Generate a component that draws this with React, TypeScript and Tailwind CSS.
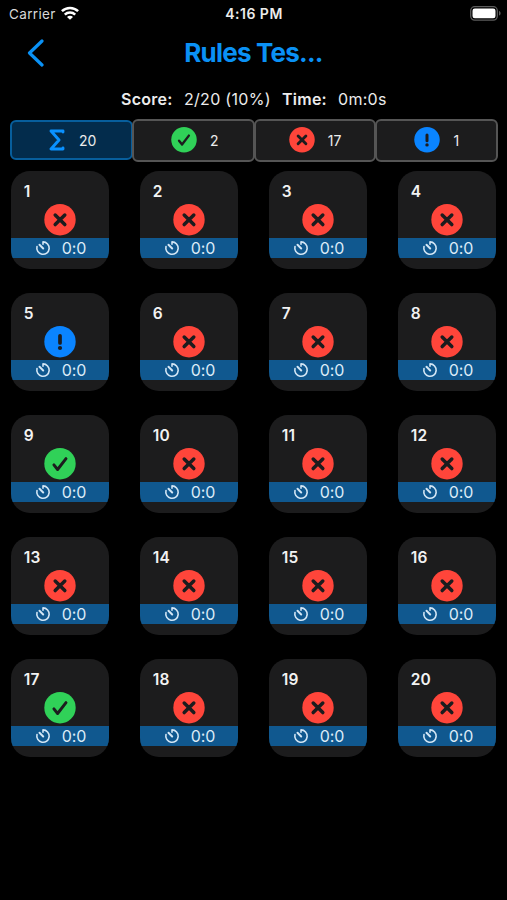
type Status = 'right' | 'wrong' | 'skipped';

const results: Status[] = Array.from({ length: 20 }, (_, i) => {
  const n = i + 1;
  if (n === 5) return 'skipped';
  return n === 9 || n === 17 ? 'right' : 'wrong';
});

function StatusIcon({ status, className }: { status: Status; className: string }) {
  if (status === 'right') {
    return (
      <svg viewBox="0 0 32 32" className={className} fill="none">
        <circle cx="16" cy="15.7" r="15.7" fill="#30d158" />
        <path d="M9.9 16.8 13.6 21.5 22 10.6" stroke="#1c1c1e" strokeWidth="2.9" strokeLinecap="round" strokeLinejoin="round" />
      </svg>
    );
  }
  if (status === 'wrong') {
    return (
      <svg viewBox="0 0 32 32" className={className} fill="none">
        <circle cx="16" cy="15.7" r="15.7" fill="#ff453a" />
        <path d="m11.2 11 9.6 9.6m0-9.6-9.6 9.6" stroke="#1c1c1e" strokeWidth="3.5" strokeLinecap="round" />
      </svg>
    );
  }
  return (
    <svg viewBox="0 0 32 32" className={className} fill="none">
      <circle cx="16" cy="15.7" r="15.7" fill="#0a84ff" />
      <path d="M16 9.8V17" stroke="#1c1c1e" strokeWidth="3.7" strokeLinecap="round" />
      <circle cx="16" cy="22" r="2.1" fill="#1c1c1e" />
    </svg>
  );
}

function TimerIcon() {
  return (
    <svg viewBox="0 0 16 16" className="h-4 w-4" fill="none" stroke="#d3e6f5" strokeWidth="1.6" strokeLinecap="round">
      <path d="M8 4.200V1.900a6.200 6.200 0 1 1-6 4.600" strokeLinejoin="round" />
      <path d="M8.200 8.500 4.500 4.800" strokeWidth="2" />
    </svg>
  );
}

function Card({ n, status }: { n: number; status: Status }) {
  return (
    <div className="flex h-[98px] w-[98px] flex-col overflow-hidden rounded-[19px] bg-[#1c1c1d]">
      <div className="h-[33px] pl-[12.5px] pt-[11px] text-[15.5px] font-semibold leading-5 tracking-[0.2px] text-[#f2f2f2]">{n}</div>
      <div className="flex h-[34px] shrink-0 justify-center">
        <StatusIcon status={status} className="h-8 w-8" />
      </div>
      <div className="flex h-[20px] shrink-0 items-center bg-[#10588f] pl-[24px] text-[#dcebf7]">
        <TimerIcon />
        <span className="ml-[10.5px] pt-px text-[16px] leading-[19px] tracking-[-0.1px]">0:0</span>
      </div>
    </div>
  );
}

const filters: { status: Status; count: number; pad: string }[] = [
  { status: 'right', count: 2, pad: 'pl-[37px]' },
  { status: 'wrong', count: 17, pad: 'pl-[33px]' },
  { status: 'skipped', count: 1, pad: 'pl-[37px]' },
];

export default function App() {
  return (
    <div className="h-[900px] w-[507px] overflow-hidden bg-black font-['Inter',sans-serif] text-[#ececec]">
      <div className="grid h-7 grid-cols-3 items-center pl-[9px] pr-[8px]">
        <div className="flex items-center gap-[5.5px]">
          <span className="text-[13.5px] tracking-[0.35px] text-[#d8d8d8]">Carrier</span>
          <svg viewBox="0 0 18 14" className="-mt-0.5 h-[14px] w-[18px]" fill="none" stroke="#fff" strokeWidth="2.5">
            <path d="M.9 5.200a11.600 11.600 0 0 1 16.200 0M3.800 8.600a7.400 7.400 0 0 1 10.400 0" />
            <path d="M9 13.700 6 10.900a4.200 4.200 0 0 1 6 0Z" fill="#fff" stroke="none" />
          </svg>
        </div>
        <span className="whitespace-nowrap text-center text-[14px] font-semibold leading-5 tracking-[0.5px]">4:16 PM</span>
        <svg viewBox="0 0 31 15" className="-mr-0.5 -mt-px h-[15px] w-[31px] justify-self-end" fill="none">
          <rect x=".7" y=".7" width="26.6" height="13.4" rx="4" stroke="#5c5c5c" strokeWidth="1.3" />
          <rect x="2.5" y="2.5" width="23" height="9.8" rx="2.3" fill="#fff" />
          <path d="M29 5v4.600c1-.4 1.600-1.200 1.600-2.300S30 5.400 29 5Z" fill="#5c5c5c" />
        </svg>
      </div>

      <div className="grid h-[50px] grid-cols-[60px_1fr_60px] items-center">
        <svg viewBox="0 0 18 28" className="ml-[27px] h-7 w-[18px]" fill="none" stroke="#0a91f5" strokeWidth="3.2" strokeLinecap="round" strokeLinejoin="round">
          <path d="M15 2 2.500 14 15 26" />
        </svg>
        <h1 className="text-center text-[26px] font-bold leading-8 tracking-[-0.8px] text-[#0a91f5]">Rules Tes...</h1>
      </div>

      <div className="flex h-10 items-center whitespace-pre pl-[121px] pt-[2px] text-[16px]">
        <span className="w-[63px] font-semibold tracking-[0.25px]">Score:</span>
        <span className="w-[98px] tracking-[0.3px]">2/20 (10%)</span>
        <span className="w-[56px] font-semibold tracking-[0.25px]">Time:</span>
        <span className="tracking-[0.3px]">0m:0s</span>
      </div>

      <div className="flex h-[44px] items-center pl-[10px] text-[14px]">
        <div className="flex h-[40px] w-[123px] items-center rounded-[6px] border-2 border-[#075e9c] bg-[#032c4c] pl-[37px]">
          <svg viewBox="0 0 16 22" className="h-[22px] w-4" fill="none" stroke="#0a91ff" strokeWidth="2.9" strokeLinecap="round" strokeLinejoin="round">
            <path d="M14 3V2H2l8 9-8 9h12v-1" />
          </svg>
          <span className="ml-[14px] tracking-[-0.1px]">20</span>
        </div>
        {filters.map((f) => (
          <div key={f.status} className={'-ml-px flex h-[43px] w-[122.7px] items-center rounded-[6px] border-2 border-[#555] bg-[#1c1c1d] ' + f.pad}>
            <StatusIcon status={f.status} className="h-[26px] w-[26px]" />
            <span className="ml-[13px]">{f.count}</span>
          </div>
        ))}
      </div>

      <div className="grid grid-cols-[repeat(4,98px)] gap-x-[31px] gap-y-[24.2px] pl-[11.2px] pt-[8.5px]">
        {results.map((status, i) => (
          <Card key={i} n={i + 1} status={status} />
        ))}
      </div>
    </div>
  );
}
